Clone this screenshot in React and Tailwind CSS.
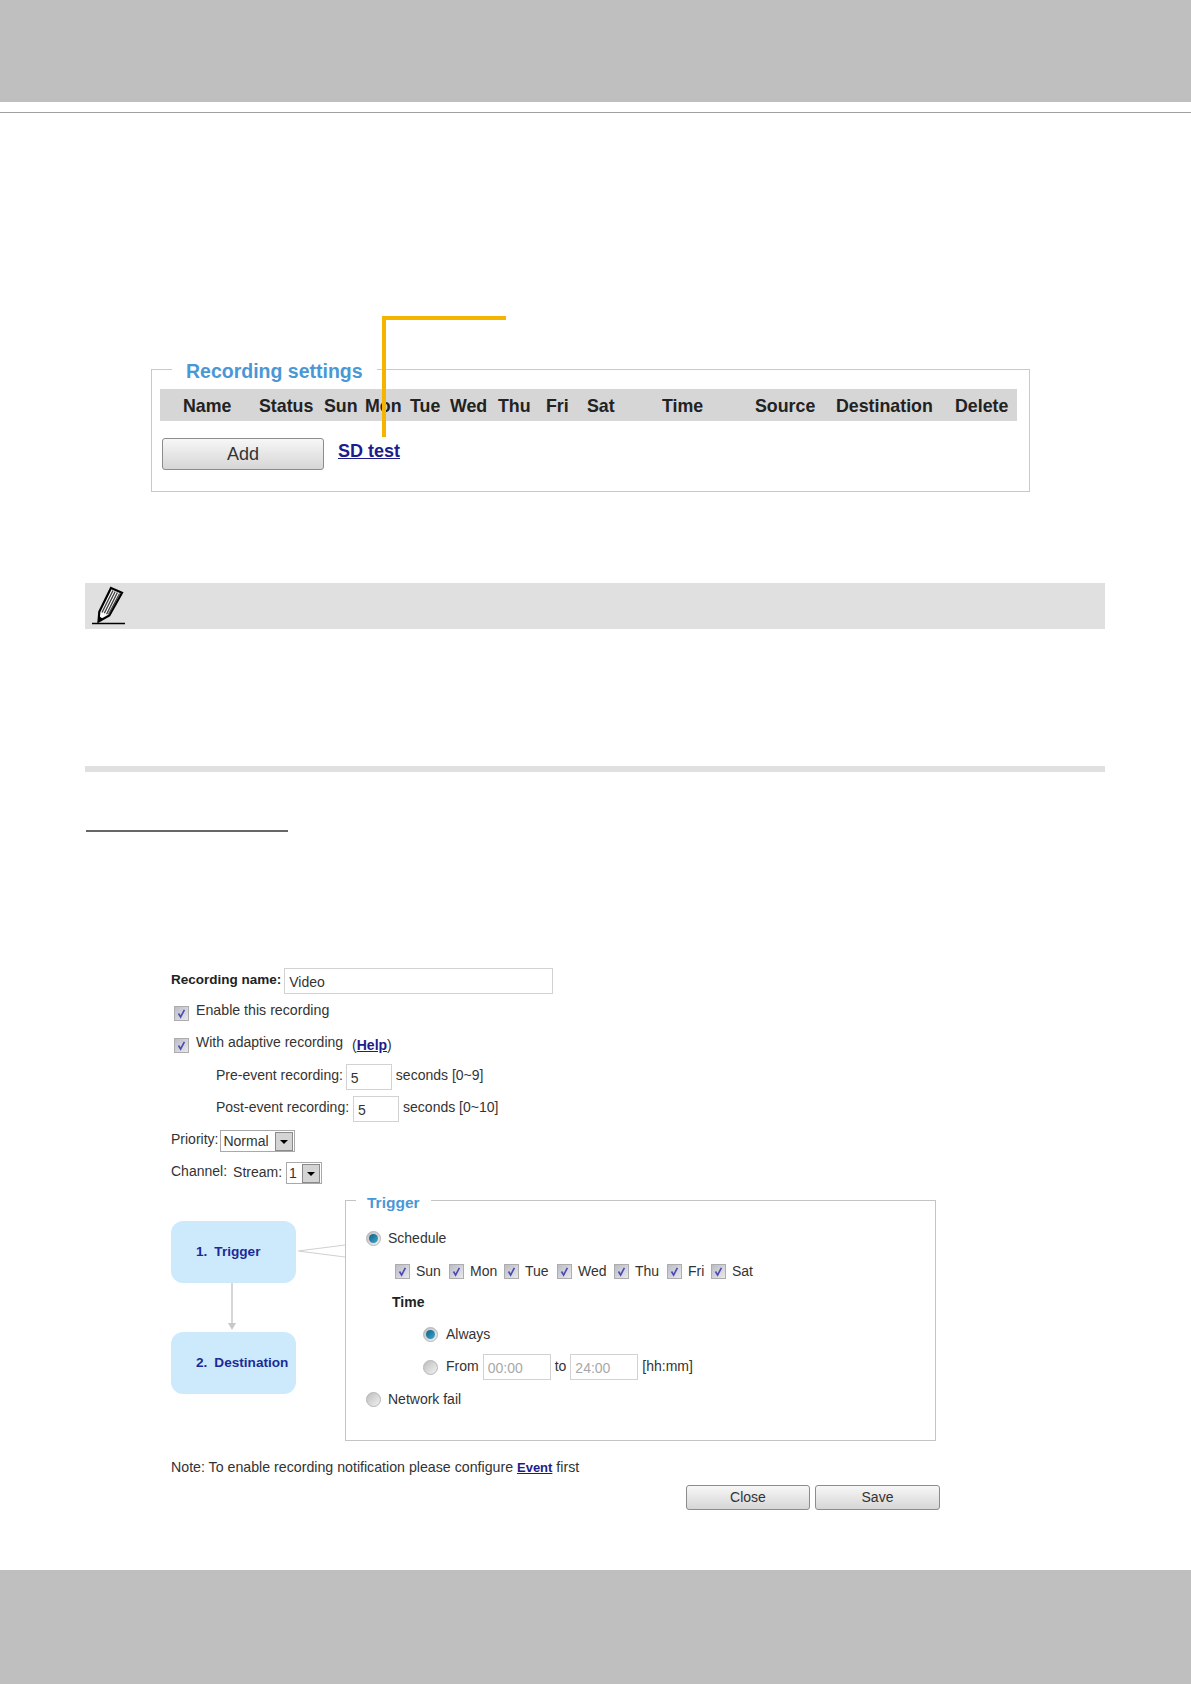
const font = { fontFamily: '"Liberation Sans", Arial, sans-serif' };

function Check() {
  return (
    <span className="inline-flex h-[15px] w-[15px] shrink-0 items-center justify-center border border-[#adadad] bg-linear-to-br from-[#bcbcc8] to-[#e8e8ec]">
      <svg width="11" height="11" viewBox="0 0 11 11" fill="none">
        <path d="M2.5 5.5 L4.6 9 L8.4 1.8" stroke="#4a4ab0" strokeWidth="1.6" />
      </svg>
    </span>
  );
}

function Radio({ on }) {
  return (
    <span className="inline-flex h-[15px] w-[15px] shrink-0 items-center justify-center rounded-full border border-[#b4b4b4] bg-linear-to-br from-[#bdbdbd] to-[#f2f2f2]">
      {on ? <span className="h-[9px] w-[9px] rounded-full bg-linear-to-br from-[#0d5f86] to-[#3fa9cf]" /> : null}
    </span>
  );
}

function Input({ value, w, muted }) {
  return (
    <span className={`inline-flex h-[26px] ${w} items-center border border-[#d2d2d2] bg-white pl-[4px] pt-[2px] text-[14px] ${muted ? 'text-[#a8a8a8]' : 'text-[#333]'}`}>
      {value}
    </span>
  );
}

function Arrow() {
  return (
    <span className="flex h-[19px] w-[18px] items-center justify-center border border-[#8a8a8a] bg-[#d4d4d4]">
      <span className="h-0 w-0 border-x-[4px] border-t-[4px] border-x-transparent border-t-black" />
    </span>
  );
}

function Select({ value, w }) {
  return (
    <span className={`inline-flex h-[22px] ${w} items-center justify-between border border-[#a9a9a9] bg-white pl-[2px] pt-[1px] pr-px text-[14px] text-[#333]`}>
      <span>{value}</span>
      <Arrow />
    </span>
  );
}

function Btn({ label, w, h, size, border }) {
  return (
    <span className={`flex ${w} ${h} ${size} ${border} items-center justify-center rounded-[3px] border-[#8c8c8c] bg-linear-to-b from-[#f7f7f7] to-[#d6d6d6] text-[#333]`}>
      {label}
    </span>
  );
}

function Link({ children, size }) {
  return <span className={`font-bold text-[#1c1c8c] underline ${size}`}>{children}</span>;
}

function Day({ label, w }) {
  return (
    <span className={`flex ${w} items-center`}>
      <span className="mt-[3px]"><Check /></span>
      <span className="ml-[6px]">{label}</span>
    </span>
  );
}

const cols = [
  ['Name', 'w-[76px]'], ['Status', 'w-[65px]'], ['Sun', 'w-[41px]'], ['Mon', 'w-[45px]'], ['Tue', 'w-[40px]'],
  ['Wed', 'w-[48px]'], ['Thu', 'w-[48px]'], ['Fri', 'w-[41px]'], ['Sat', 'w-[75px]'], ['Time', 'w-[93px]'],
  ['Source', 'w-[81px]'], ['Destination', 'w-[119px]'], ['Delete', 'w-[60px]'],
];

export default function App() {
  return (
    <div style={font} className="relative flex h-[1684px] w-[1191px] flex-col overflow-hidden bg-white text-[14px] text-[#333]">
      <div className="h-[102px] shrink-0 bg-[#bfbfbf]" />
      <div className="mt-[10px] h-px shrink-0 bg-[#a0a0a0]" />

      <div className="absolute left-[382px] top-[316px] h-[121px] w-[124px] border-l-4 border-t-4 border-[#f5b400]" />

      <fieldset className="ml-[151px] mt-[242px] h-[137px] w-[879px] shrink-0 border border-[#c9c9c6] pl-[8px]">
        <legend className="relative top-[2px] ml-[12px] px-[14px] text-[19.5px] font-bold text-[#4a97d6]">Recording settings</legend>
        <div className="mt-[5px] flex h-[32px] w-[857px] items-center bg-[#d6d6d6] pt-[2px] pl-[23px] text-[17.8px] font-bold text-[#222]">
          {cols.map(([t, w]) => (
            <span key={t} className={`${w} shrink-0`}>{t}</span>
          ))}
        </div>
        <div className="mt-[17px] flex items-start">
          <span className="ml-[2px]"><Btn label="Add" w="w-[162px]" h="h-[32px]" size="text-[18px]" border="border-[1.5px]" /></span>
          <span className="ml-[14px] text-[18px]"><Link>SD test</Link></span>
        </div>
      </fieldset>

      <div className="ml-[85px] mt-[91px] flex h-[46px] w-[1020px] shrink-0 items-start bg-[#e0e0e0] pl-[7px] pt-[3px]">
        <svg width="33" height="39" viewBox="0 0 33 39" fill="none">
          <path d="M19 2 L30 6.7 L17.3 29.5 L6.5 35.5 L7.3 25.7 Z" fill="#fff" stroke="#000" strokeWidth="2.2" />
          <path d="M21 4.5 L10 26.5 M23.2 5.5 L12.3 27.3 M25.4 6.5 L14.6 28.2 M27.6 7.5 L16.5 28.5" stroke="#444" strokeWidth="1.4" />
          <path d="M7 30 L6.5 36 L11.5 33.2 Z" fill="#000" />
          <path d="M0 37.5 H33" stroke="#000" strokeWidth="1.4" />
        </svg>
      </div>

      <div className="ml-[85px] mt-[137px] h-[6px] w-[1020px] shrink-0 bg-[#e0e0e0]" />
      <div className="ml-[86px] mt-[58px] h-[2px] w-[202px] shrink-0 bg-[#666]" />

      <div className="ml-[171px] mt-[133px] flex shrink-0 flex-col">
        <div className="flex h-[32px] items-center">
          <span className="mb-[2px] text-[13.5px] font-bold text-[#222]">Recording name:</span>
          <span className="ml-[3px]"><Input value="Video" w="w-[269px]" /></span>
        </div>
        <div className="ml-[3px] flex h-[32px] items-center">
          <Check />
          <span className="mb-[5px] ml-[7px] text-[14.2px]">Enable this recording</span>
        </div>
        <div className="ml-[3px] flex h-[32px] items-center">
          <Check />
          <span className="mb-[5px] ml-[7px]">With adaptive recording</span>
          <span className="ml-[9px]">(<Link>Help</Link>)</span>
        </div>
        <div className="ml-[45px] flex h-[32px] items-center">
          <span className="mb-[3px]">Pre-event recording:</span>
          <span className="ml-[3px]"><Input value="5" w="w-[46px]" /></span>
          <span className="mb-[3px] ml-[4px]">seconds [0~9]</span>
        </div>
        <div className="ml-[45px] flex h-[32px] items-center">
          <span className="mb-[3px]">Post-event recording:</span>
          <span className="ml-[4px]"><Input value="5" w="w-[46px]" /></span>
          <span className="mb-[3px] ml-[4px]">seconds [0~10]</span>
        </div>
        <div className="flex h-[32px] items-center">
          <span className="mb-[4px]">Priority:</span>
          <span className="ml-[2px]"><Select value="Normal" w="w-[75px]" /></span>
        </div>
        <div className="flex h-[32px] items-center">
          <span className="mb-[4px]">Channel:</span>
          <span className="mb-[2px] ml-[6px]">Stream:</span>
          <span className="ml-[4px]"><Select value="1" w="w-[36px]" /></span>
        </div>
      </div>

      <div className="ml-[171px] flex shrink-0 items-start">
        <div className="mt-[32px] flex w-[125px] shrink-0 flex-col items-center">
          <div className="flex h-[62px] w-full items-center rounded-[12px] bg-[#cdeafc] pt-[1px] pl-[25px] text-[13.6px] font-bold text-[#1c2a96]">
            <span className="mr-[7px]">1.</span>Trigger
          </div>
          <svg className="mr-[4px]" width="10" height="49" viewBox="0 0 10 49" fill="none">
            <path d="M5 0 V40" stroke="#c8c8c8" strokeWidth="1.5" />
            <path d="M1 40 H9 L5 47 Z" fill="#c8c8c8" />
          </svg>
          <div className="flex h-[62px] w-full items-center rounded-[12px] bg-[#cdeafc] pt-[1px] pl-[25px] text-[13.6px] font-bold text-[#1c2a96]">
            <span className="mr-[7px]">2.</span>Destination
          </div>
        </div>
        <svg className="mt-[54px] shrink-0" width="49" height="20" viewBox="0 0 49 20" fill="none">
          <path d="M2 8 L49 2 M2 8 L49 14" stroke="#d0d0d0" strokeWidth="1.2" />
        </svg>
        <fieldset className="h-[252px] w-[591px] shrink-0 border border-[#c4c4c4] pl-[20px]">
          <legend className="relative top-[2px] -ml-[10px] px-[11px] text-[15.5px] font-bold text-[#4a97d6]">Trigger</legend>
          <div className="mt-[16px] flex h-[20px] items-center">
            <Radio on /><span className="ml-[7px]">Schedule</span>
          </div>
          <div className="ml-[29px] mt-[12px] flex h-[22px] items-center">
            <Day label="Sun" w="w-[54px]" />
            <Day label="Mon" w="w-[55px]" />
            <Day label="Tue" w="w-[53px]" />
            <Day label="Wed" w="w-[57px]" />
            <Day label="Thu" w="w-[53px]" />
            <Day label="Fri" w="w-[44px]" />
            <Day label="Sat" w="w-[50px]" />
          </div>
          <div className="ml-[26px] mt-[10px] flex h-[20px] items-center font-bold text-[#222]">Time</div>
          <div className="ml-[57px] mt-[12px] flex h-[20px] items-center">
            <Radio on /><span className="ml-[8px]">Always</span>
          </div>
          <div className="ml-[57px] mt-[10px] flex h-[26px] items-center">
            <Radio />
            <span className="mb-[2px] ml-[8px]">From</span>
            <span className="ml-[4px]"><Input value="00:00" w="w-[68px]" muted /></span>
            <span className="mb-[2px] ml-[4px]">to</span>
            <span className="ml-[4px]"><Input value="24:00" w="w-[68px]" muted /></span>
            <span className="mb-[2px] ml-[4px]">[hh:mm]</span>
          </div>
          <div className="mt-[9px] flex h-[20px] items-center">
            <Radio /><span className="ml-[7px]">Network fail</span>
          </div>
        </fieldset>
      </div>

      <div className="ml-[171px] mt-[17px] shrink-0 text-[14.2px] leading-[18px]">
        Note: To enable recording notification please configure <Link size="text-[13px]">Event</Link> first
      </div>
      <div className="ml-[686px] mt-[8px] flex shrink-0 gap-[5px]">
        <Btn label="Close" w="w-[124px]" h="h-[25px]" size="text-[14px]" border="border" />
        <Btn label="Save" w="w-[125px]" h="h-[25px]" size="text-[14px]" border="border" />
      </div>

      <div className="mt-auto h-[114px] shrink-0 bg-[#bfbfbf]" />
    </div>
  );
}
